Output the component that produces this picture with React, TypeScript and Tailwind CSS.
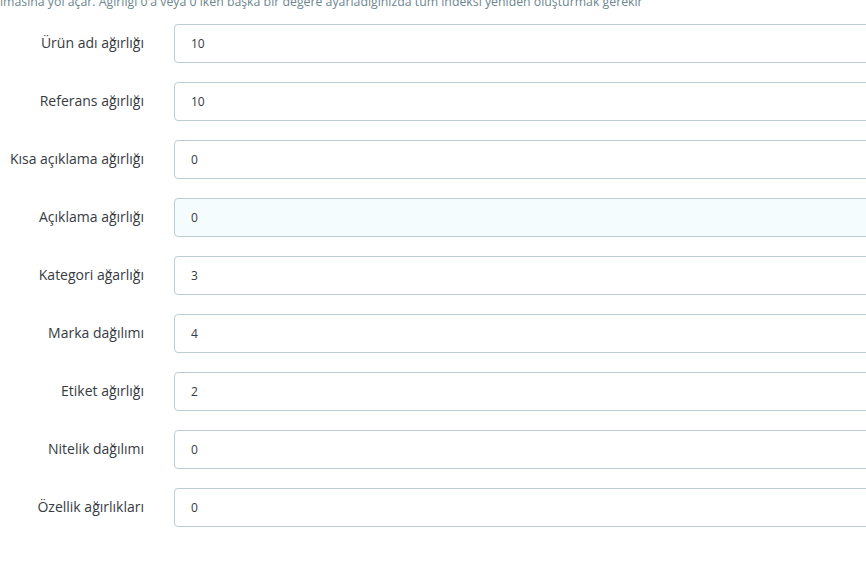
import React from 'react';

const fields: { label: string; value: string; highlight?: boolean }[] = [
  { label: 'Ürün adı ağırlığı', value: '10' },
  { label: 'Referans ağırlığı', value: '10' },
  { label: 'Kısa açıklama ağırlığı', value: '0' },
  { label: 'Açıklama ağırlığı', value: '0', highlight: true },
  { label: 'Kategori ağarlığı', value: '3' },
  { label: 'Marka dağılımı', value: '4' },
  { label: 'Etiket ağırlığı', value: '2' },
  { label: 'Nitelik dağılımı', value: '0' },
  { label: 'Özellik ağırlıkları', value: '0' },
];

const App: React.FC = () => {
  return (
    <div
      className="w-[866px] h-[561px] overflow-hidden bg-white"
      style={{ fontFamily: '"Open Sans", "Noto Sans", sans-serif' }}
    >
      <div className="h-[24px] overflow-hidden">
        <p className="-mt-[7px] whitespace-nowrap text-[12.3px] leading-[18px] text-[#6c868e]">
          lmasına yol açar. Ağırlığı 0'a veya 0 iken başka bir değere ayarladığınızda tüm indeksi yeniden oluşturmak gerekir
        </p>
      </div>
      <div className="flex w-[940px] flex-col gap-[19px]">
        {fields.map((f) => (
          <div key={f.label} className="flex items-center">
            <label className="-mt-[2px] w-[144px] shrink-0 text-right text-[14px] text-[#363a41]">{f.label}</label>
            <div className="ml-[30px] flex-1">
              <input
                readOnly
                value={f.value}
                className={`h-[39px] w-full rounded-[4px] border border-[#bbcdd2] px-[16px] text-[12px] text-[#363a41] outline-none ${
                  f.highlight ? 'bg-[#f4fcfd]' : 'bg-white'
                }`}
                style={{ fontFamily: '"Open Sans", sans-serif' }}
              />
            </div>
          </div>
        ))}
      </div>
    </div>
  );
};

export default App;
